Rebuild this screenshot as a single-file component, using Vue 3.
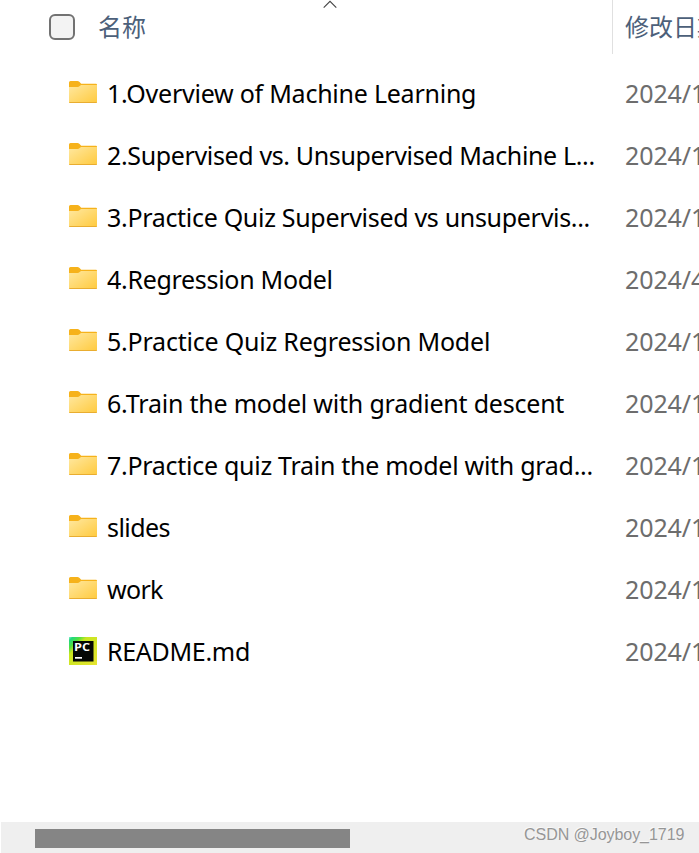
<script setup>
const rows = [
  { name: '1.Overview of Machine Learning', date: '2024/11', spacing: -0.24 },
  { name: '2.Supervised vs. Unsupervised Machine L...', date: '2024/11', spacing: -0.36 },
  { name: '3.Practice Quiz Supervised vs unsupervis...', date: '2024/11', spacing: -0.31 },
  { name: '4.Regression Model', date: '2024/4', spacing: -0.3 },
  { name: '5.Practice Quiz Regression Model', date: '2024/11', spacing: -0.21 },
  { name: '6.Train the model with gradient descent', date: '2024/11', spacing: -0.21 },
  { name: '7.Practice quiz Train the model with grad...', date: '2024/11', spacing: -0.28 },
  { name: 'slides', date: '2024/11', spacing: -0.55 },
  { name: 'work', date: '2024/11', spacing: -0.7 },
  { name: 'README.md', date: '2024/11', spacing: -0.3, file: true },
]
</script>

<template>
  <main class="explorer">
    <header class="head">
      <div class="head-name">
        <span class="check"></span>
        <span class="label">名称</span>
        <svg class="sort" width="14" height="9" viewBox="0 0 14 9"><path d="M.7 7.6 7 1.3l6.3 6.3" fill="none" stroke="#444" stroke-width="1.1" /></svg>
      </div>
      <div class="head-date">修改日期</div>
    </header>
    <section class="list">
      <div v-for="r in rows" :key="r.name" class="row">
        <svg v-if="r.file" class="icon file" width="28" height="28" viewBox="0 0 28 28">
          <defs>
            <linearGradient id="pc" x1="0" y1="0" x2="1" y2="1">
              <stop offset="0" stop-color="#8df0d0" />
              <stop offset=".07" stop-color="#22d880" />
              <stop offset=".2" stop-color="#50e040" />
              <stop offset=".32" stop-color="#c8e620" />
              <stop offset="1" stop-color="#e6e430" />
            </linearGradient>
          </defs>
          <path d="M0 0h28v28H0z" fill="url(#pc)" />
          <path d="M4 4h20.500v20.500H4z" fill="#050805" />
          <text x="5" y="14" class="pc" textLength="16" lengthAdjust="spacingAndGlyphs">PC</text>
          <path d="M6 20h7v1.700H6z" fill="#fff" />
        </svg>
        <svg v-else class="icon" width="28" height="28" viewBox="0 0 28 28">
          <defs>
            <linearGradient id="fold" x1="0" y1="0" x2="1" y2="1">
              <stop offset="0" stop-color="#ffe8a0" />
              <stop offset="1" stop-color="#ffca3e" />
            </linearGradient>
          </defs>
          <path d="M0 4.500Q0 3 1.500 3H8.500Q9.500 3 10.300 3.800L12.200 5.700H27Q28 5.700 28 6.700V12H0z" fill="#f6b21b" />
          <path d="M0 9H8.500Q9.800 9 10.700 8L12 6.900H28V24Q28 25 27 25H1Q0 25 0 24z" fill="url(#fold)" />
          <path d="M.3 24.500H27.700" stroke="#e9ad30" stroke-width="1" />
        </svg>
        <span class="name" :style="{ letterSpacing: r.spacing + 'px' }">{{ r.name }}</span>
        <span class="date">{{ r.date }}</span>
      </div>
    </section>
    <footer class="scroll">
      <div class="thumb"></div>
      <span class="mark">CSDN @Joyboy_1719</span>
    </footer>
  </main>
</template>

<style>
body { background: #fff; overflow: hidden; }
</style>
<style scoped>
.explorer { width: 699px; height: 853px; display: flex; flex-direction: column; overflow: hidden; font-family: "Noto Sans", "Noto Sans CJK SC", sans-serif; }
.head { display: flex; height: 54px; flex: none; font-family: "Noto Sans CJK SC", sans-serif; font-size: 24px; line-height: 52px; color: #4c607a; white-space: nowrap; }
.head-name { box-sizing: border-box; width: 613px; flex: none; border-right: 1px solid #e0e0e0; padding-left: 49px; display: flex; align-items: flex-start; }
.check { box-sizing: border-box; width: 26px; height: 26px; margin-top: 14px; border: 2px solid #727272; border-radius: 6px; background: #f3f3f3; }
.label { margin-left: 23px; width: 225px; }
.head-date { padding-left: 12px; }
.list { padding-top: 9px; flex: 1; }
.row { height: 62px; display: flex; align-items: center; padding-left: 69px; white-space: nowrap; font-size: 25px; line-height: 60px; }
.icon { flex: none; margin-right: 10px; margin-top: -4px; }
.file { margin-top: -2px; }
.name { width: 518px; flex: none; color: #000; margin-top: -3px; }
.date { color: #6d6d6d; margin-top: -3px; letter-spacing: -.1px; }
.pc { font: bold 11px "Open Sans", sans-serif; fill: #fff; }
.scroll { height: 31px; flex: none; margin-left: 1px; background: #efefef; display: flex; align-items: flex-start; }
.thumb { width: 315px; height: 19px; flex: none; margin: 7px 0 0 34px; background: #858585; }
.mark { margin-left: 174px; font: 16px/25px "Liberation Sans", sans-serif; letter-spacing: -.05px; color: #969696; text-shadow: -1px -1px 0 #f8f8f8; white-space: nowrap; }
</style>
